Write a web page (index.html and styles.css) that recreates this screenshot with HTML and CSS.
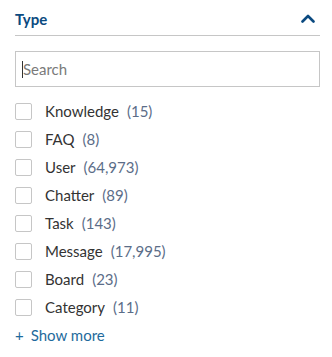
FILE: index.html
```html
<!DOCTYPE html>
<html>
<head>
<meta charset="utf-8">
<link rel="stylesheet" href="styles.css">
</head>
<body>
<section class="facet">
  <header class="facet-header">
    <h2 class="facet-title">Type</h2>
    <svg class="chevron" width="14" height="9" viewBox="0 0 14 9"><path d="M1.5 7.5 L7 2 L12.5 7.5" fill="none" stroke="#0b4a80" stroke-width="2.6" stroke-linecap="round" stroke-linejoin="round"/></svg>
  </header>
  <div class="search-wrap">
    <div class="search"><span class="caret"></span><span class="placeholder">Search</span></div>
  </div>
  <ul class="options">
    <li class="option"><span class="box"></span><span class="label">Knowledge</span><span class="count">(15)</span></li>
    <li class="option"><span class="box"></span><span class="label">FAQ</span><span class="count">(8)</span></li>
    <li class="option"><span class="box"></span><span class="label">User</span><span class="count">(64,973)</span></li>
    <li class="option"><span class="box"></span><span class="label">Chatter</span><span class="count">(89)</span></li>
    <li class="option"><span class="box"></span><span class="label">Task</span><span class="count">(143)</span></li>
    <li class="option"><span class="box"></span><span class="label">Message</span><span class="count">(17,995)</span></li>
    <li class="option"><span class="box"></span><span class="label">Board</span><span class="count">(23)</span></li>
    <li class="option"><span class="box"></span><span class="label">Category</span><span class="count">(11)</span></li>
  </ul>
  <a class="show-more"><span class="plus">+</span>Show more</a>
</section>
</body>
</html>
```

FILE: styles.css
```css
html, body {
  margin: 0;
  padding: 0;
  background: #fff;
}
body {
  font-family: Lato, "Open Sans", sans-serif;
  color: #333;
}
.facet {
  width: 305px;
  padding: 0 12px 0 15px;
}
.facet-header {
  display: flex;
  align-items: center;
  justify-content: space-between;
  height: 35px;
  border-bottom: 1px solid #c6c6c6;
}
.facet-title {
  margin: 0;
  padding-top: 2px;
  font-size: 15px;
  font-weight: 700;
  color: #0b4a80;
}
.chevron {
  margin-right: 5px;
  margin-top: 2px;
}
.search-wrap {
  padding-top: 15px;
}
.search {
  height: 34px;
  border: 1px solid #c6c6c6;
  display: flex;
  align-items: center;
  padding-left: 6px;
  font-size: 15px;
  color: #7a7a7a;
}
.caret {
  width: 1px;
  height: 17px;
  background: #333;
}
.options {
  list-style: none;
  margin: 0;
  padding: 10px 0 0;
}
.option {
  display: flex;
  align-items: center;
  height: 28px;
  font-size: 15px;
}
.box {
  width: 15px;
  height: 15px;
  border: 1px solid #c6c6c6;
  border-radius: 2px;
  margin-right: 13px;
  flex: none;
}
.label {
  color: #333;
  margin-right: 8px;
}
.count {
  color: #5b6d88;
}
.show-more {
  display: flex;
  align-items: center;
  height: 28px;
  font-size: 15px;
  color: #1e6a9c;
}
.plus {
  margin-right: 7px;
}
```
